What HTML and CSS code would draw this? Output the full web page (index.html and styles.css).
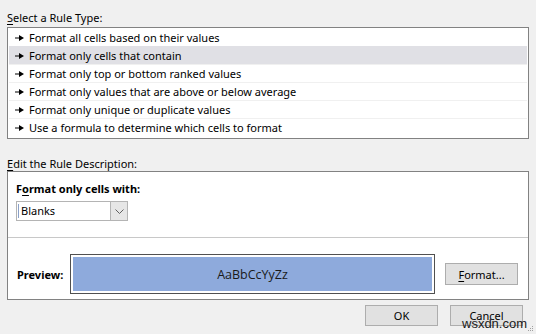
FILE: index.html
```html
<!DOCTYPE html>
<html>
<head>
<meta charset="utf-8">
<link rel="stylesheet" href="styles.css">
</head>
<body>
<div class="dialog">
  <div class="label"><u>S</u>elect a Rule Type:</div>
  <div class="list">
    <div class="row"><svg class="arr" viewBox="0 0 9 6" width="9" height="6"><path d="M0 2.5h5v1H0z M4 0L9 3L4 6z" fill="#000"/></svg>Format all cells based on their values</div>
    <div class="row sel"><svg class="arr" viewBox="0 0 9 6" width="9" height="6"><path d="M0 2.5h5v1H0z M4 0L9 3L4 6z" fill="#000"/></svg>Format only cells that contain</div>
    <div class="row line"><svg class="arr" viewBox="0 0 9 6" width="9" height="6"><path d="M0 2.5h5v1H0z M4 0L9 3L4 6z" fill="#000"/></svg>Format only top or bottom ranked values</div>
    <div class="row line"><svg class="arr" viewBox="0 0 9 6" width="9" height="6"><path d="M0 2.5h5v1H0z M4 0L9 3L4 6z" fill="#000"/></svg>Format only values that are above or below average</div>
    <div class="row line"><svg class="arr" viewBox="0 0 9 6" width="9" height="6"><path d="M0 2.5h5v1H0z M4 0L9 3L4 6z" fill="#000"/></svg>Format only unique or duplicate values</div>
    <div class="row line"><svg class="arr" viewBox="0 0 9 6" width="9" height="6"><path d="M0 2.5h5v1H0z M4 0L9 3L4 6z" fill="#000"/></svg>Use a formula to determine which cells to format</div>
  </div>
  <div class="label label2"><u>E</u>dit the Rule Description:</div>
  <div class="desc">
    <div class="top">
      <div class="bold">F<u>o</u>rmat only cells with:</div>
      <div class="combo">
        <span class="caret"></span>
        <span class="val">Blanks</span>
        <span class="drop"><svg viewBox="0 0 9 5" width="9" height="5"><path d="M0.5 0.5L4.5 4.5L8.5 0.5" fill="none" stroke="#606060" stroke-width="1"/></svg></span>
      </div>
    </div>
    <div class="sep"></div>
    <div class="bottom">
      <div class="bold plabel">Preview:</div>
      <div class="preview"><div class="fill">AaBbCcYyZz</div></div>
      <div class="btn fmt"><u>F</u>ormat...</div>
    </div>
  </div>
  <div class="actions">
    <div class="btn">OK</div>
    <div class="btn">Cancel</div>
  </div>
</div>
<div class="mark">wsxdn.com</div>
<svg class="grip" viewBox="0 0 6 6" width="6" height="6"><g fill="#a0a0a0"><rect x="4" y="0" width="1" height="1"/><rect x="2" y="2" width="1" height="1"/><rect x="4" y="2" width="1" height="1"/><rect x="0" y="4" width="1" height="1"/><rect x="2" y="4" width="1" height="1"/><rect x="4" y="4" width="1" height="1"/></g></svg>
</body>
</html>
```
FILE: styles.css
```css
html, body {
  margin: 0;
  padding: 0;
  background: #f0f0f0;
  width: 536px;
  height: 334px;
  overflow: hidden;
  position: relative;
}
.dialog {
  padding: 0 7px;
  font-family: "Noto Sans", "DejaVu Sans", sans-serif;
  font-size: 11px;
  color: #000;
}
u { text-decoration: underline; text-underline-offset: 2px; }
.label {
  height: 16px;
  line-height: 16px;
  padding-top: 1px;
  box-sizing: border-box;
  margin-top: 9px;
  margin-bottom: 2px;
}
.label2 {
  margin-top: 16px;
  margin-bottom: 0;
  padding-top: 1px;
}
.list {
  background: #fff;
  border: 1px solid #828282;
  padding-bottom: 2px;
}
.row {
  height: 18px;
  line-height: 16px;
  padding: 2px 0 0 6px;
  display: flex;
  align-items: center;
  margin: 0 1px;
  box-sizing: border-box;
}
.row.line { border-top: 1px solid #f0f0f0; padding-top: 1px; }
.row.sel { background: #e0e0e5; }
.arr { margin-right: 5px; flex: none; }
.desc {
  background: #fff;
  border: 1px solid #828282;
}
.top {
  padding: 9px 8px 16px 8px;
}
.bold { font-weight: bold; line-height: 15px; }
.combo {
  margin-top: 5px;
  width: 112px;
  height: 20px;
  box-sizing: border-box;
  border: 1px solid #b4b4b4;
  display: flex;
  align-items: center;
  position: relative;
}
.caret { width: 1px; height: 14px; background: #8aa0c8; margin-left: 1px; }
.val { margin-left: 2px; flex: 1; line-height: 18px; }
.drop {
  width: 17px;
  height: 18px;
  box-sizing: border-box;
  background: #e6e6e6;
  border-left: 1px solid #b4b4b4;
  display: flex;
  align-items: center;
  justify-content: center;
}
.sep { height: 1px; background: #c8c8c8; }
.bottom {
  display: flex;
  align-items: center;
  padding: 16px 10px 5px 9px;
}
.plabel { width: 53px; padding-top: 1px; }
.preview {
  width: 365px;
  height: 40px;
  box-sizing: border-box;
  border: 1px solid #505050;
  padding: 2px;
  background: #fff;
}
.fill {
  height: 100%;
  background: #8eaadc;
  display: flex;
  align-items: center;
  justify-content: center;
  font-family: "Open Sans", "Noto Sans", sans-serif;
  font-size: 12.5px;
  color: #1a1a1a;
}
.btn {
  width: 73px;
  height: 21px;
  box-sizing: border-box;
  background: #e1e1e1;
  border: 1px solid #adadad;
  display: flex;
  align-items: center;
  justify-content: center;
  line-height: 19px;
}
.fmt { margin-left: auto; height: 22px; }
.actions {
  display: flex;
  justify-content: flex-end;
  gap: 12px;
  margin-top: 5px;
  padding-right: 6px;
}
.mark {
  position: absolute;
  left: 462px;
  top: 317px;
  font-family: "Liberation Sans", Arial, sans-serif;
  font-size: 13px;
  line-height: 13px;
  color: #1a1a1a;
}
.grip { position: absolute; right: 2px; bottom: 2px; }
```
